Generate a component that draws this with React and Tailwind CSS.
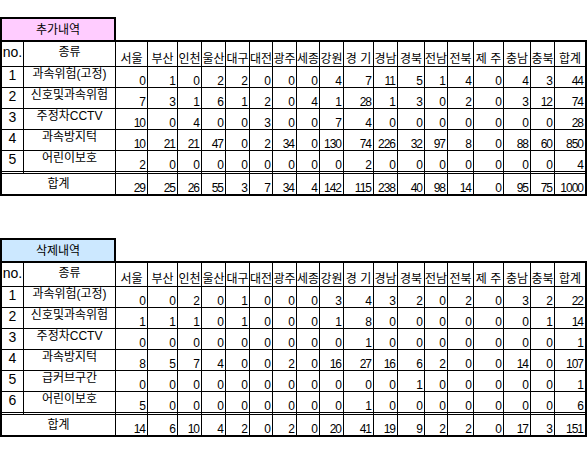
const regions = [
  "서울", "부산", "인천", "울산", "대구", "대전", "광주", "세종", "강원",
  "경 기", "경남", "경북", "전남", "전북", "제 주", "충남", "충북", "합계",
];

const added = {
  title: "추가내역",
  bg: "bg-[#ffccff]",
  headerH: "h-[25px]",
  rows: [
    ["과속위험(고정)", [0, 1, 0, 2, 2, 0, 0, 0, 4, 7, 11, 5, 1, 4, 0, 4, 3, 44]],
    ["신호및과속위험", [7, 3, 1, 6, 1, 2, 0, 4, 1, 28, 1, 3, 0, 2, 0, 3, 12, 74]],
    ["주정차CCTV", [10, 0, 4, 0, 0, 3, 0, 0, 7, 4, 0, 0, 0, 0, 0, 0, 0, 28]],
    ["과속방지턱", [10, 21, 21, 47, 0, 2, 34, 0, 130, 74, 226, 32, 97, 8, 0, 88, 60, 850]],
    ["어린이보호", [2, 0, 0, 0, 0, 0, 0, 0, 0, 2, 0, 0, 0, 0, 0, 0, 0, 4]],
  ],
  total: [29, 25, 26, 55, 3, 7, 34, 4, 142, 115, 238, 40, 98, 14, 0, 95, 75, 1000],
};

const deleted = {
  title: "삭제내역",
  bg: "bg-[#cce8ff]",
  headerH: "h-[24px]",
  rows: [
    ["과속위험(고정)", [0, 0, 2, 0, 1, 0, 0, 0, 3, 4, 3, 2, 0, 2, 0, 3, 2, 22]],
    ["신호및과속위험", [1, 1, 1, 0, 1, 0, 0, 0, 1, 8, 0, 0, 0, 0, 0, 0, 1, 14]],
    ["주정차CCTV", [0, 0, 0, 0, 0, 0, 0, 0, 0, 1, 0, 0, 0, 0, 0, 0, 0, 1]],
    ["과속방지턱", [8, 5, 7, 4, 0, 0, 2, 0, 16, 27, 16, 6, 2, 0, 0, 14, 0, 107]],
    ["급커브구간", [0, 0, 0, 0, 0, 0, 0, 0, 0, 0, 0, 1, 0, 0, 0, 0, 0, 1]],
    ["어린이보호", [5, 0, 0, 0, 0, 0, 0, 0, 0, 1, 0, 0, 0, 0, 0, 0, 0, 6]],
  ],
  total: [14, 6, 10, 4, 2, 0, 2, 0, 20, 41, 19, 9, 2, 2, 0, 17, 3, 151],
};

const num = "flex items-end justify-end pr-[2px] text-[12px] leading-[12px] tracking-[-1px] border-black overflow-hidden";

const Sheet = ({ data }) => {
  return (
    <div>
      <div className={`w-[116px] h-[23px] border-2 border-b-0 border-black ${data.bg} flex items-center justify-center text-[12px] leading-[14px]`}>
        {data.title}
      </div>
      <div className="w-[587px] border-2 border-black grid grid-cols-[22px_92px_32px_30px_24px_24px_24px_23px_24px_23px_24px_30px_24px_27px_23px_26px_30px_27px_24px_30px]">
        {/* header */}
        <div className={`${data.headerH} border-b border-r border-black flex justify-center items-start pt-[3px] text-[14px] leading-[14px]`}>
          no.
        </div>
        <div className={`${data.headerH} border-b border-r border-black flex justify-center items-start pt-[3px] text-[12px] leading-[14px]`}>
          종류
        </div>
        {regions.map((r, i) => (
          <div
            key={r}
            className={`${data.headerH} border-b border-black flex justify-center items-end text-[12px] leading-[14px] whitespace-pre overflow-hidden ${i < regions.length - 1 ? "border-r" : ""}`}
          >
            {r}
          </div>
        ))}

        {/* rows */}
        {data.rows.map(([name, values], idx) => {
          const last = idx === data.rows.length - 1;
          const rowCls = last ? "h-[23px] border-b-[3px] border-double" : "h-[21px] border-b";
          return (
            <div key={name} className="contents">
              <div className={`${rowCls} border-r border-black flex justify-center items-start text-[14px] leading-[16px]`}>
                {idx + 1}
              </div>
              <div className={`${rowCls} border-r border-black flex justify-center items-start text-[12px] leading-[14px] whitespace-nowrap`}>
                {name}
              </div>
              {values.map((v, i) => (
                <div key={i} className={`${rowCls} ${num} ${i < values.length - 1 ? "border-r" : ""}`}>
                  {v}
                </div>
              ))}
            </div>
          );
        })}

        {/* total */}
        <div className="col-span-2 h-[20px] border-r border-black flex justify-center items-start pt-[3px] text-[12px] leading-[14px]">
          합계
        </div>
        {data.total.map((v, i) => (
          <div key={i} className={`h-[20px] ${num} ${i < data.total.length - 1 ? "border-r" : ""}`}>
            {v}
          </div>
        ))}
      </div>
    </div>
  );
};

export default function App() {
  return (
    <div className="w-[588px] h-[456px] bg-white text-black pt-[17px] font-['Liberation_Sans','Noto_Sans_CJK_KR',sans-serif] flex flex-col gap-[42px]">
      <Sheet data={added} />
      <Sheet data={deleted} />
    </div>
  );
}
